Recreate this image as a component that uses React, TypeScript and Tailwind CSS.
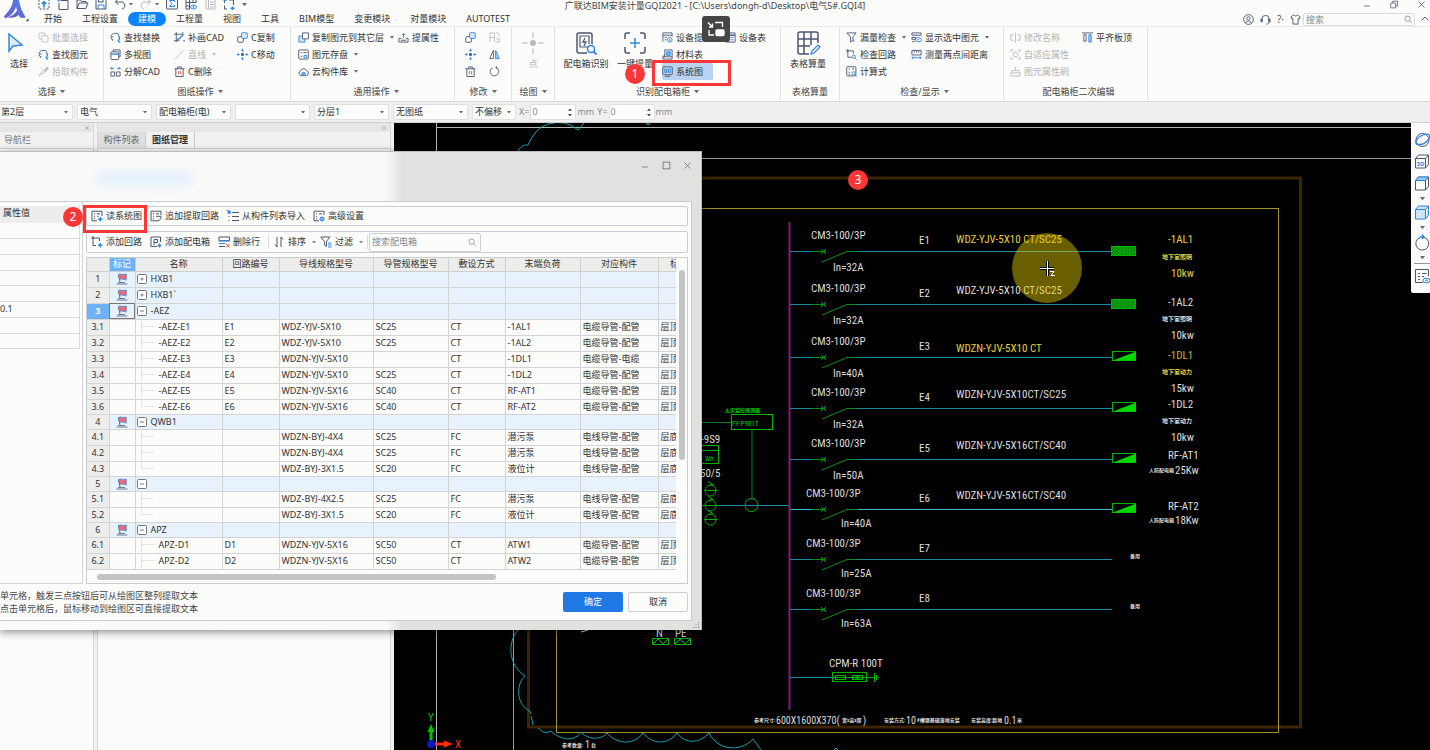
import { useState } from 'react';
import type { ReactNode } from 'react';
import clsx from 'clsx';

const NAVY = '#4b5673';
const BLUE = '#2f86e0';

/* ---------- icons, all drawn on a 12 x 12 grid ---------- */

const glyphs: Record<string, ReactNode> = {
  upload: <><rect x="1" y="1" width="10" height="10" strokeDasharray="2 1.4" /><path d="M6 9.5V4M3.8 6 6 3.6 8.2 6" stroke={BLUE} strokeWidth="1.6" /></>,
  newFile: <><path d="M4 2.500h7v9H2V5" /><path d="M0 2h4M2 0v4" stroke={BLUE} /></>,
  open: <path d="M1 10.500V2h3.500l1 1.500H10V5M1 10.500 3.200 5H12l-2.200 5.500z" />,
  save: <><path d="M1 1h8.500L11 2.500V11H1z" /><path d="M3.500 1v3h4.500V1" /><path d="M3 11V7h6v4" stroke={BLUE} /></>,
  undo: <path d="M4 1 1.500 4 4.500 6.500M1.500 4H7c5 0 5 6 1 7" />,
  redo: <path d="M8 1l2.500 3L7.500 6.500M10.500 4H5c-5 0-5 6-1 7" />,
  sigma: <><rect x=".5" y="0" width="11" height="11" rx="1" /><path d="M8.500 4V2.500h-5L6 5.500 3.500 8.500h5V7" stroke={BLUE} /></>,
  gridEye: <><path d="M1 1h10M1 4.500h10M1 8h4M1 1v10M4.500 1v10M8 1v4M1 11h4M11 1v4" /><ellipse cx="8.500" cy="9" rx="3" ry="2" stroke={BLUE} /><circle cx="8.500" cy="9" r=".6" stroke={BLUE} /></>,
  sheet: <path d="M2 1h9v10H2zM4.500 1v10M6 4h3.500M6 6.500h3.500M6 9h3.500" />,
  exportBox: <><path d="M4 2H1.500v3M1.500 7.500V11H4M6 2h4.500v5" /><path d="M0 2h3M1.500.5v3" stroke={BLUE} /><path d="M9.500 8.500v3.500M7.500 10.300h4" stroke={BLUE} strokeWidth="1.400" /></>,
  copyGrey: <><rect x="1" y="1" width="7" height="7" rx="2" /><rect x="4" y="4" width="7" height="7" rx="2" fill="#fcfcfb" /></>,
  find: <><path d="M3.500 9.500A4.500 4.500 0 0 1 2 3M4 1.500h4A4.500 4.500 0 0 1 9.500 3" stroke={NAVY} /><path d="M3 1.500v9" strokeDasharray="1.500 1.500" stroke={NAVY} /><path d="M9 3.500c2 2 1.500 5-.5 6.500M8.500 9.500l2.500 2" stroke={BLUE} strokeWidth="1.400" /></>,
  picker: <path d="M1 11.500 2 9l4-4M3 10l4-4M5 3.500 8.500 7M7 5l3-4 1.500 1.500L8 6z" fill="currentColor" />,
  multiView: <><path d="M3.500 2.500v-1.500h7.500v7.500h-1.500" /><rect x="1" y="3" width="8.500" height="8.500" rx="1" /><path d="M1 5.500h8.500" stroke={BLUE} strokeWidth="1.500" /></>,
  explode: <><path d="M1 6.500h4v4.500H1zM7 6.500h4v4.500H7z" /><path d="M4.500 2.500H.8M2.300 1 .8 2.500 2.300 4M7.500 2.500h3.700M9.700 1l1.500 1.500L9.700 4" stroke={BLUE} /></>,
  drawCad: <><path d="M0 2.500h9M2.500 0v11M0 9.500h6M9.500 2V0M10 9.500h2" /><path d="M4 9 10.500 2.500M4 9l.5-2" stroke={BLUE} strokeWidth="1.400" /></>,
  line: <path d="M1 11 11 1" strokeDasharray="6 1.500" />,
  trash: <><path d="M.5 3h11M4 3V1h4v2M2 3v8.500h8V3" /><path d="M4.800 5.500v3.500M7.200 5.500v3.500" stroke="#e0563f" /></>,
  copy: <><rect x=".8" y="5" width="6.200" height="6.200" rx="1.500" /><rect x="5" y=".8" width="6.200" height="6.200" rx="1" fill="#d7e9fc" stroke={BLUE} /></>,
  move: <><path d="M6 0v3M6 9v3M0 6h3M9 6h3M4.600 1.600 6 .3l1.400 1.300M4.600 10.400 6 11.700l1.400-1.300M1.600 4.600.3 6l1.300 1.400M10.400 4.600 11.700 6l-1.300 1.400" stroke={BLUE} /><path d="M5 5h2v2H5z" fill={NAVY} /></>,
  copyLayer: <><path d="M1 4.500h6.500V11H1z" stroke={BLUE} fill="#d7e9fc" /><path d="M5 1h6.500v6.500H5z" fill="#fcfcfb" /></>,
  storage: <><rect x=".8" y="1" width="10.400" height="10" rx="1" /><path d="M3 4h1.500M6 4h3.500M3 8h1.500" /><path d="M6.500 7h3v2.500h-3z" stroke={BLUE} /></>,
  cloud: <><path d="M3 10.500a2.800 2.800 0 0 1 0-5.300A3.500 3.500 0 0 1 9.500 5a2.900 2.900 0 0 1-.3 5.500z" /><path d="M4 9a2 2 0 0 1 4 0z" stroke={BLUE} fill="#7fb6ef" /></>,
  liftAttr: <><path d="M1 7v4h10V7M3 9h6M1 7h2.500M8.500 7H11" /><path d="M6 7V1.500M4 3.500 6 1.500l2 2" stroke={BLUE} /></>,
  mirrorGrey: <path d="M1 11V1h5v10M1 6h5M7.500 1c3 0 3.500 2 3.500 4M7.500 11h4V7.500h-4" />,
  mirror: <><path d="M4.800 1.500v9H.8z" /><path d="M7.200 1.500v9h4z" stroke={BLUE} fill="#a7cdf5" /></>,
  rotate: <path d="M8 1.800A4.700 4.700 0 1 1 4 1.800M8.500.3 7.500 2l1.800.8" />,
  device: <><path d="M1 10.500V1h10v4M1 3.500h10M3 6h2M3 8.500h2" /><circle cx="8.500" cy="8.500" r="2.500" stroke={BLUE} /><path d="M8.500 10V7.500" stroke={BLUE} /></>,
  material: <><path d="M3 9V1h8v8M1 11h10V8.500H1zM1 8.500 3 6" /><path d="M5 3h4v4H5z" fill="#7fb6ef" stroke={BLUE} /></>,
  deviceTable: <><path d="M1 1h10v10H1z" /><path d="M1 3.500h10" strokeWidth="1.600" /><path d="M6 6h3M6 8.500h3" stroke={BLUE} /></>,
  systemMap: <><rect x=".8" y="1" width="10.400" height="8.500" rx="1" /><path d="M3 11.300h6" /><path d="M3 3.500h2v3.500H3zM7 3.500h2v3.500H7z" stroke={BLUE} /></>,
  leak: <><path d="M1 1h10L7.500 5.500V9L5 11V5.500z" /><path d="M8.500 11V8.500" stroke={BLUE} /></>,
  loop: <><path d="M0 2h3M2 0v9h4M2 2h6v3" /><circle cx="8.500" cy="8.500" r="1.800" stroke={BLUE} /><path d="m10 10 1.500 1.500" stroke={BLUE} /></>,
  formula: <><rect x=".8" y=".8" width="10" height="10" rx="1" /><path d="M3 3.500h1M7 3h1.500M3 7h1M3 9h1" strokeWidth="1.400" /><circle cx="8.300" cy="8" r="1.800" stroke={BLUE} /><path d="m9.500 9.500 2 2" stroke={BLUE} /></>,
  showSel: <><path d="M1 1h10v2.500H1zM1 6h4v2H1zM1 10.500h3" /><ellipse cx="8" cy="8.500" rx="3.500" ry="2.300" stroke={BLUE} /><path d="M7 8.500h2" stroke={BLUE} /></>,
  measure: <><path d="M1 1.500h10v5H1zM3.500 1.500V4M6 1.500V4M8.500 1.500V4" /><path d="M1 9.500h10M2.500 8 1 9.500 2.500 11M9.500 8 11 9.500 9.500 11" stroke={BLUE} /></>,
  rename: <path d="M4 3H1v6h3M8 3h3v6H8M6 .5v11" />,
  adapt: <><path d="M1 3.500V1h2.500M8.500 1H11v2.500M11 8.500V11H8.500M3.500 11H1V8.500" /><rect x="3.500" y="3.500" width="5" height="5" rx="1" /></>,
  brush: <path d="M6 1v4M2 7.500V5h8v2.500M1 7.500h10V11H1z" />,
  align: <><path d="M0 1h12" /><path d="M2 3h2.500v7H2z" /><path d="M7.500 3H10v8H7.500z" stroke={BLUE} fill="#a7cdf5" /></>,
  readMap: <><path d="M11 6V1.200H1v9.600h5M3 3.800h1M6 3.800h3M3 6.300h1M3 8.600h1M6 6.300h1.500" /><path d="M9.300 7v4.500M7 9.300h4.600" stroke={BLUE} strokeWidth="1.400" /></>,
  addLoop: <><path d="M0 2h3M2 0v9.500h3M2 2h6.500v3" /><path d="M9.200 7v4.500M7 9.200h4.500" stroke={BLUE} strokeWidth="1.400" /></>,
  appendLoop: <><path d="M11 5V1.200H1v9.600h5M3 3.800h1M6 3.800h3M3 6.300h1M3 8.600h1M6 6.300h2" /><path d="M6 10.800c3 .5 5-1 5-4M8 6.300h3.500" /></>,
  listIn: <><path d="M5 2.500h7M5 6.500h7M5 10.500h7M1.500 6.500h1M1.500 10.500h1" /><path d="m0 0 3 3M3 .5V3H.5" stroke={BLUE} strokeWidth="1.400" /></>,
  advanced: <><path d="M11 5V1.200H1v9.600h5M3 3.800h1M6 3.800h3M3 6.300h1M3 8.600h1" /><circle cx="9" cy="9" r="2" fill="#7fb6ef" stroke={BLUE} /></>,
  addBox: <><path d="M7 10.500H1V1h9.500v5" /><path d="M4 9V3.500h3.500v3H4" /><path d="M9.500 7.500v4M7.500 9.500h4" stroke={BLUE} strokeWidth="1.400" /></>,
  delRow: <><path d="M7 10.500H1M1 1h10.500v4H1z" /><path d="M1 4.500h10.500M1 7.500h6" stroke={BLUE} /><path d="m8 8 3.500 3.500M11.500 8 8 11.500" stroke="#e0563f" /></>,
  sort: <path d="M4 1v10L2 8.500M8 11V1l2 2.500" />,
  filter: <><path d="M.8 1h9L6.500 5.500v5L4.500 9V5.500z" /><path d="M8 7h3.500M8 9h3.500M8 11h3.500" stroke={BLUE} /></>,
  search: <><circle cx="5.500" cy="5.500" r="4" /><path d="m8.500 8.500 3 3" /></>,
  user: <><circle cx="6" cy="6" r="5.300" /><circle cx="6" cy="4.800" r="1.800" /><path d="M2.800 9.800c1-2.600 5.400-2.600 6.400 0" /></>,
  headset: <path d="M2 8V5.500a4 4 0 0 1 8 0V8M1 5.500v3h1.500v-3zM11 5.500v3H9.500v-3zM10 8.500c0 2-1.500 2.500-3 2.500" />,
  shirt: <path d="M4 1 1 3l1 2.500 1.200-.5v6h5.600V5l1.200.5L11 3 8 1c-.5 1.500-3.500 1.500-4 0z" />,
  close: <path d="m2 2 8 8M10 2l-8 8" />,
  restore: <path d="M1 4h6.500v6.500H1zM3.500 4V1.500H10V8H7.500" />,
  maximize: <rect x="1.500" y="1.500" width="9" height="9" />,
  minimize: <path d="M1 8h8" />,
  chevronUp: <path d="m1 8 5-5 5 5" strokeWidth="1.400" />,
};

function Icon({ name, className = 'size-3', color = NAVY }: { name: string; className?: string; color?: string }) {
  return (
    <svg viewBox="0 0 12 12" className={clsx('shrink-0 overflow-visible', className)} fill="none" stroke={color} color={color} strokeWidth="1" aria-hidden="true">
      {glyphs[name]}
    </svg>
  );
}

function Caret({ color = '#6b6b6b', className = 'w-[5px]' }: { color?: string; className?: string }) {
  return (
    <svg viewBox="0 0 6 4" className={clsx('shrink-0', className)} fill={color} aria-hidden="true">
      <path d="M0 0h6L3 4z" />
    </svg>
  );
}

/* ---------- header ---------- */

const quickIcons = ['upload', 'newFile', 'open', 'save', 'undo', 'redo', 'sigma', 'gridEye', 'sheet', 'exportBox'];
const tabs = ['开始', '工程设置', '建模', '工程量', '视图', '工具', 'BIM模型', '变更模块', '对量模块', 'AUTOTEST'];

function Header() {
  const [active, setActive] = useState('建模');

  return (
    <header className="flex h-[27px] border-b border-[#ececec]">
      <svg viewBox="0 0 34 27" className="w-[34px] shrink-0" aria-hidden="true">
        <defs>
          <linearGradient id="logo" x1="0" y1="1" x2="1" y2="0">
            <stop offset="0" stopColor="#6a5fd0" />
            <stop offset="1" stopColor="#4d7fe6" />
          </linearGradient>
        </defs>
        <path d="M13 0h6c1 7 4 13 7 18-2 1-4 1-6 0-2-3-3-7-4-11-2 6-6 10-11 12-2-1-1-3 1-5 4-4 6-8 7-14z" fill="url(#logo)" />
        <path d="M7 18c4-1 8-3 10-7l2 4c-3 3-7 4-12 3z" fill="#5a63cf" />
        <path d="M29 19v3h-3z" fill="#444" />
      </svg>
      <div className="flex min-w-0 flex-1 flex-col">
        <div className="flex h-[12px] items-start justify-between">
          <div className="flex w-[240px] gap-[7px] pl-1">
            {quickIcons.map((name) => (
              <button key={name} aria-label={name} className="-mt-[2px] flex items-center gap-[3px]">
                <Icon name={name} className="size-[12px]" color={name === 'redo' || name === 'sheet' ? '#b9bcc4' : NAVY} />
                {(name === 'undo' || name === 'redo') && <Caret className="w-[4px]" />}
              </button>
            ))}
            <button aria-label="更多"><Caret className="w-[5px]" /></button>
          </div>
          <h1 className="text-[9px] leading-[11px] text-[#444]">广联达BIM安装计量GQI2021 - [C:\Users\dongh-d\Desktop\电气5#.GQI4]</h1>
          <div className="flex w-[274px] justify-end gap-[18px] pr-1">
            <button aria-label="最小化"><Icon name="minimize" className="size-[9px]" /></button>
            <button aria-label="还原"><Icon name="restore" className="size-[9px]" /></button>
            <button aria-label="关闭"><Icon name="close" className="size-[9px]" /></button>
          </div>
        </div>
        <div className="flex items-center justify-between">
          <nav className="flex">
            {tabs.map((t) => (
              <button
                key={t}
                onClick={() => setActive(t)}
                className={clsx('h-[14px] rounded-full px-[10px] text-[9px] leading-[14px]', t === active ? 'bg-[#0b84ff] text-white' : 'text-[#333]')}
              >
                {t}
              </button>
            ))}
          </nav>
          <div className="flex items-center gap-[6px]">
            <Icon name="user" className="size-[11px]" />
            <Icon name="headset" className="size-[11px]" />
            <span className="text-[10px] leading-[12px] text-[#4b5673]">?·</span>
            <Icon name="shirt" className="size-[11px]" />
            <label className="-ml-1 flex h-[13px] w-[112px] items-center rounded-[2px] border border-[#dcdcdc] px-[2px]">
              <input aria-label="搜索" placeholder="搜索" className="min-w-0 flex-1 text-[9px] leading-[11px] placeholder:text-[#888]" />
              <Icon name="search" className="size-[8px]" color="#777" />
            </label>
            <Icon name="chevronUp" className="mr-[1px] size-[8px]" />
          </div>
        </div>
      </div>
    </header>
  );
}

/* ---------- ribbon ---------- */

function Group({ label, caret, className, children }: { label: string; caret?: boolean; className?: string; children: ReactNode }) {
  return (
    <section className={clsx('flex h-[73px] shrink-0 flex-col justify-between border-r border-[#e2e2e2]', className)}>
      <div className="flex pt-[2px]">{children}</div>
      <div className="flex items-center justify-center gap-1 pb-[2px] text-[9px] leading-[12px] text-[#444]">
        {label}
        {caret && <Caret />}
      </div>
    </section>
  );
}

function Column({ className, children }: { className?: string; children: ReactNode }) {
  return <div className={clsx('flex shrink-0 flex-col items-start', className)}>{children}</div>;
}

function Tool({ icon, label, caret, disabled, on }: { icon: string; label?: string; caret?: boolean; disabled?: boolean; on?: boolean }) {
  return (
    <button
      disabled={disabled}
      aria-label={label ?? icon}
      className={clsx('flex h-[17px] items-center gap-[3px] whitespace-nowrap text-[9px] leading-[14px]', disabled ? 'text-[#b4b4b4]' : 'text-[#333]', on && 'rounded-[2px] bg-[#b9d3f0] pr-[10px]')}
    >
      <Icon name={icon} className="size-[11px]" color={disabled ? '#bdbdbd' : NAVY} />
      {label}
      {caret && <span className="pl-[3px]"><Caret className="w-[4px]" color={disabled ? '#bdbdbd' : '#6b6b6b'} /></span>}
    </button>
  );
}

function BigTool({ label, disabled, className, children }: { label: string; disabled?: boolean; className?: string; children: ReactNode }) {
  return (
    <button disabled={disabled} className={clsx('flex shrink-0 flex-col items-center gap-[1px] whitespace-nowrap pt-[1px] text-[9px] leading-[14px]', disabled ? 'text-[#b4b4b4]' : 'text-[#333]', className)}>
      <svg viewBox="0 0 26 26" className="size-[26px]" fill="none" stroke={NAVY} strokeWidth="1.500" aria-hidden="true">{children}</svg>
      {label}
    </button>
  );
}

function Ribbon() {
  return (
    <div className="flex h-[75px] overflow-hidden border-b border-[#d9d9d9]">
      <Group label="选择" caret className="w-[104px]">
        <BigTool label="选择" className="w-[38px]">
          <path d="M3 4v17l4-5 1 0 8-1z" stroke={BLUE} fill="#dcebfb" />
        </BigTool>
        <Column>
          <Tool icon="copyGrey" label="批量选择" disabled />
          <Tool icon="find" label="查找图元" />
          <Tool icon="picker" label="拾取构件" disabled />
        </Column>
      </Group>
      <Group label="图纸操作" caret className="w-[187px] pl-[6px]">
        <Column className="w-[64px]">
          <Tool icon="find" label="查找替换" />
          <Tool icon="multiView" label="多视图" />
          <Tool icon="explode" label="分解CAD" />
        </Column>
        <Column className="w-[63px]">
          <Tool icon="drawCad" label="补画CAD" />
          <Tool icon="line" label="直线" caret disabled />
          <Tool icon="trash" label="C删除" />
        </Column>
        <Column>
          <Tool icon="copy" label="C复制" />
          <Tool icon="move" label="C移动" />
        </Column>
      </Group>
      <Group label="通用操作" caret className="w-[164px] pl-[7px]">
        <Column className="w-[100px]">
          <Tool icon="copyLayer" label="复制图元到其它层" caret />
          <Tool icon="storage" label="图元存盘" caret />
          <Tool icon="cloud" label="云构件库" caret />
        </Column>
        <Column>
          <Tool icon="liftAttr" label="提属性" />
        </Column>
      </Group>
      <Group label="修改" caret className="w-[57px]">
        <div className="grid grid-cols-2 gap-x-[13px] pl-[10px]">
          <Tool icon="copy" />
          <Tool icon="mirrorGrey" disabled />
          <Tool icon="move" />
          <Tool icon="mirror" />
          <Tool icon="trash" />
          <Tool icon="rotate" />
        </div>
      </Group>
      <Group label="绘图" caret className="w-[43px]">
        <BigTool label="点" disabled className="w-full">
          <path d="M13 2v6M13 18v6M2 13h6M18 13h6" stroke="#b9b9b9" strokeWidth="1" />
          <circle cx="13" cy="13" r="3" fill="#b9b9b9" stroke="none" />
        </BigTool>
      </Group>
      <Group label="识别配电箱柜" caret className="w-[226px]">
        <BigTool label="配电箱识别" className="w-[62px]">
          <path d="M19 14V5a2 2 0 0 0-2-2H6a2 2 0 0 0-2 2v16a2 2 0 0 0 2 2h8" />
          <path d="M15 17H7V6h9v8" strokeWidth="1.200" />
          <path d="m12 8-2 4h3l-2 4" strokeWidth="1.300" />
          <circle cx="18" cy="19" r="3.500" stroke={BLUE} /><path d="m20.500 21.500 3 3" stroke={BLUE} strokeWidth="2" />
        </BigTool>
        <BigTool label="一键提量" className="w-[36px]">
          <path d="M8 3H5a2 2 0 0 0-2 2v4M18 3h3a2 2 0 0 1 2 2v4M8 23H5a2 2 0 0 1-2-2v-4M18 23h3a2 2 0 0 0 2-2v-4" />
          <path d="M13 8v10M8 13h10" stroke={BLUE} />
        </BigTool>
        <Column className="w-[68px] pl-[9px]">
          <Tool icon="device" label="设备提量" />
          <Tool icon="material" label="材料表" />
          <Tool icon="systemMap" label="系统图" on />
        </Column>
        <Column className="pl-[4px]">
          <Tool icon="deviceTable" label="设备表" />
        </Column>
      </Group>
      <Group label="表格算量" className="w-[59px]">
        <BigTool label="表格算量" className="w-full pr-1">
          <path d="M14 24H5a2 2 0 0 1-2-2V4a2 2 0 0 1 2-2h16a2 2 0 0 1 2 2v9M9 2v22M16 2v13M3 9h20M3 16h12" />
          <path d="m16 24 1-3 6-6 2 2-6 6z" stroke={BLUE} strokeWidth="1.200" />
        </BigTool>
      </Group>
      <Group label="检查/显示" caret className="w-[164px] pl-[6px]">
        <Column className="w-[65px]">
          <Tool icon="leak" label="漏量检查" caret />
          <Tool icon="loop" label="检查回路" />
          <Tool icon="formula" label="计算式" />
        </Column>
        <Column>
          <Tool icon="showSel" label="显示选中图元" caret />
          <Tool icon="measure" label="测量两点间距离" />
        </Column>
      </Group>
      <Group label="配电箱柜二次编辑" className="w-[144px] pl-[6px]">
        <Column className="w-[72px]">
          <Tool icon="rename" label="修改名称" disabled />
          <Tool icon="adapt" label="自适应属性" disabled />
          <Tool icon="brush" label="图元属性刷" disabled />
        </Column>
        <Column>
          <Tool icon="align" label="平齐板顶" />
        </Column>
      </Group>
    </div>
  );
}

/* ---------- option bar ---------- */

const levels = ['第2层', '电气', '配电箱柜(电)', '', '分层1', '无图纸'];

function Picker({ value, label, narrow }: { value: string; label: string; narrow?: boolean }) {
  return (
    <span className={clsx('flex h-[16px] shrink-0 items-center rounded-[2px] border border-[#e0e0e0] bg-[#fdfdfd] pr-[4px]', narrow ? 'w-[44px]' : 'w-[75px]')}>
      <select aria-label={label} className="min-w-0 flex-1 appearance-none pl-[2px] text-[9px] leading-[14px] text-[#333]">
        <option>{value}</option>
      </select>
      <Caret className="w-[4px]" />
    </span>
  );
}

function Offset({ axis }: { axis: string }) {
  return (
    <label className="flex items-center gap-px text-[9px] leading-[14px] text-[#8a8a8a]">
      {axis}=
      <span className="flex h-[16px] w-[46px] items-center rounded-[2px] border border-[#e0e0e0] bg-[#fdfdfd] pr-[3px]">
        <input defaultValue="0" className="min-w-0 flex-1 pl-[1px]" />
        <svg viewBox="0 0 5 11" className="w-[4px]" fill="#444" aria-hidden="true"><path d="M0 3.500 2.500.5 5 3.500zM0 7.500h5L2.500 10.500z" /></svg>
      </span>
      mm
    </label>
  );
}

function OptionBar() {
  return (
    <div className="flex h-[21px] items-center gap-[3px] border-b border-[#cfcfcf] bg-[#efefef]">
      <div className="-ml-[2px] flex gap-1">
        {levels.map((v, i) => <Picker key={i} value={v} label={`选项${i + 1}`} />)}
        <Picker value="不偏移" label="偏移" narrow />
      </div>
      <Offset axis="X" />
      <Offset axis="Y" />
    </div>
  );
}

/* ---------- docked panels ---------- */

function Docks() {
  return (
    <div className="flex w-[394px] shrink-0 gap-[3px] bg-[#f1f1f1] pr-[3px]">
      <section className="w-[94px] border-r border-[#d8d8d8] bg-[#fbfbfa]">
        <div className="flex h-[9px] items-center justify-end bg-[#e6e6e6] pr-[3px]"><Icon name="close" className="size-[6px]" color="#888" /></div>
        <h2 className="h-[17px] border-b border-[#d0d0d0] bg-[#f1f1f1] pl-1 text-[9px] leading-[16px] text-[#777]">导航栏</h2>
      </section>
      <section className="flex-1 border-x border-[#d8d8d8] bg-[#fbfbfa]">
        <div className="flex h-[9px] items-center justify-end bg-[#e6e6e6] pr-[3px]"><Icon name="close" className="size-[6px]" color="#888" /></div>
        <div className="flex h-[17px] border-b border-[#d0d0d0] bg-[#f1f1f1] text-[9px] leading-[16px]">
          <button className="w-[48px] border-r border-[#c9c9c9] bg-[#dedede] text-[#666]">构件列表</button>
          <button className="w-[49px] border-r border-[#c9c9c9] font-bold text-[#333]">图纸管理</button>
        </div>
      </section>
    </div>
  );
}

/* ---------- CAD drawing ---------- */

const CAD_FONT = '"Liberation Sans Narrow", "Roboto Condensed", Roboto, "Noto Sans CJK SC", sans-serif';
const WHITE = '#dedede';
const YELLOW = '#e8d040';
const GREEN = '#00b400';
const CYAN = '#1a8ba3';

interface Circuit {
  id: string;
  y: number;
  x: number;
  amp: string;
  ampX: number;
  cable?: string;
  cableY?: number;
  hot?: boolean;
  end?: 'hatch' | 'wedge';
}

const circuits: Circuit[] = [
  { id: 'E1', y: 251, x: 811, amp: 'In=32A', ampX: 833, cable: 'WDZ-YJV-5X10 CT/SC25', cableY: 243, hot: true, end: 'hatch' },
  { id: 'E2', y: 304, x: 811, amp: 'In=32A', ampX: 833, cable: 'WDZ-YJV-5X10 CT/SC25', cableY: 294, end: 'hatch' },
  { id: 'E3', y: 357, x: 811, amp: 'In=40A', ampX: 833, cable: 'WDZN-YJV-5X10 CT', cableY: 352, hot: true, end: 'wedge' },
  { id: 'E4', y: 408, x: 811, amp: 'In=32A', ampX: 833, cable: 'WDZN-YJV-5X10CT/SC25', cableY: 398, end: 'wedge' },
  { id: 'E5', y: 459, x: 811, amp: 'In=50A', ampX: 833, cable: 'WDZN-YJV-5X16CT/SC40', cableY: 449, end: 'wedge' },
  { id: 'E6', y: 509, x: 806, amp: 'In=40A', ampX: 841, cable: 'WDZN-YJV-5X16CT/SC40', cableY: 499, end: 'wedge' },
  { id: 'E7', y: 559, x: 806, amp: 'In=25A', ampX: 841 },
  { id: 'E8', y: 609, x: 806, amp: 'In=63A', ampX: 841 },
];

const loads: [number, number, string, string, number?][] = [
  [1168, 243, '-1AL1', YELLOW],
  [1162, 259, '地下室照明', YELLOW, 6],
  [1171, 277, '10kw', YELLOW],
  [1168, 306, '-1AL2', WHITE],
  [1162, 321, '地下室照明', WHITE, 6],
  [1171, 339, '10kw', WHITE],
  [1168, 359, '-1DL1', '#c8b030'],
  [1162, 374, '地下室动力', YELLOW, 6],
  [1171, 392, '15kw', WHITE],
  [1168, 408, '-1DL2', WHITE],
  [1162, 423, '地下室动力', WHITE, 6],
  [1171, 441, '10kw', WHITE],
  [1168, 459, 'RF-AT1', WHITE],
  [1149, 472, '人防配电箱', WHITE, 5],
  [1175, 474, '25Kw', WHITE],
  [1168, 510, 'RF-AT2', WHITE],
  [1149, 522, '人防配电箱', WHITE, 5],
  [1175, 524, '18Kw', WHITE],
  [1130, 558, '备用', WHITE, 5],
  [1130, 608, '备用', WHITE, 5],
];

function Drawing() {
  return (
    <svg viewBox="394 123 1036 627" preserveAspectRatio="xMinYMin slice" className="absolute inset-0 h-full w-full" fill="none" fontFamily={CAD_FONT} fontSize="11">
      <defs>
        <pattern id="hatch" width="3" height="3" patternUnits="userSpaceOnUse">
          <path d="M0 3 3 0" stroke="#007000" strokeWidth="1" />
        </pattern>
      </defs>
      <path d="M436.500 123v627M436 127.500h994" stroke="#b4b4b4" />
      <path d="M513.500 750V158.500H1430" stroke="#9a9a9a" />
      <rect x="528.500" y="178" width="772" height="549" stroke="#3d2504" strokeWidth="3" />
      <rect x="556.500" y="208.500" width="722" height="524" stroke="#a3932c" />

      {/* revision cloud */}
      <path
        d="M518 151Q522 144 528 145 535 128 548 124 566 119 578 130L584 123M646 123l2 2 2-2M518 630C508 641 507 664 525 676 515 685 517 706 530 711l1 3M531 716l2 9M538 728l5 4q3 2 8-1c7 7 22 13 30 1 5 7 20 9 26 1 8 10 26 14 36 0 9 11 24 13 34 0 8 11 22 11 32 0 8 17 31 20 44 6l8 11M834 750l2-2 2 2"
        stroke="#17a0b4"
      />

      {/* incoming side */}
      <path d="M702 505.500h87" stroke={CYAN} />
      <g stroke={GREEN}>
        <path d="M702 422.500h29M752 430v68" stroke="#0a7a1e" />
        <rect x="731.500" y="414.500" width="41" height="15" />
        <circle cx="751.500" cy="505" r="6.500" />
        <path d="M700 445.500h18.500v18H700M700 450.500h18" />
        {[490.5, 505.5, 519.5].map((cy) => (
          <g key={cy}>
            <circle cx="710.500" cy={cy} r="5.500" />
            <path d={`M704 ${cy}h13M708 ${cy - 9}l5 3-4 1`} />
          </g>
        ))}
      </g>
      <text x="725" y="412" fontSize="5" fontWeight="700" fill="#00d000">火灾监控探测器</text>
      <text x="732" y="426" fontSize="7" fill="#00d000">FY-P901T</text>
      <text x="705" y="461" fontSize="7" fill="#00d000">Wh</text>
      <g fill={WHITE}>
        <text x="701" y="443">-9S9</text>
        <text x="700" y="477">50/5</text>
        <text x="656" y="637">N</text>
        <text x="675" y="637">PE</text>
      </g>
      <path d="M581 632l7-2" stroke={WHITE} />
      <path d="M652.500 638.500h16v6h-16zM674.500 638.500h16v6h-16zM653 644l5-5 5 5 5-5M675 644l5-5 5 5 5-5" stroke={GREEN} />

      {/* bus bar and its outgoing circuits */}
      {circuits.map((c) => (
        <g key={c.id}>
          <path d={`M790 ${c.y + 0.5}h22M858 ${c.y + 0.5}h254`} stroke={c.id === 'E6' ? '#42b4d0' : CYAN} />
          <path d={`M812 ${c.y + 0.5}h13M821 ${c.y - 2}l5 5M826 ${c.y - 2}l-5 5M822 ${c.y + 11}l25-10.500h11`} stroke="#0a8f14" />
          <g fill={WHITE}>
            <text x={c.x} y={c.y - 12}>CM3-100/3P</text>
            <text x={c.ampX} y={c.y + (c.ampX > 833 ? 18 : 20)}>{c.amp}</text>
            <text x="919" y={c.y - 7}>{c.id}</text>
          </g>
          {c.cable && <text x="956" y={c.cableY} fill={c.hot ? YELLOW : WHITE}>{c.cable}</text>}
          {c.end === 'hatch' && (
            <>
              <rect x="1111.500" y={c.y - 4.5} width="24" height="9" fill="#00a800" stroke="#00c000" />
              <rect x="1111.500" y={c.y - 4.5} width="24" height="9" fill="url(#hatch)" />
            </>
          )}
          {c.end === 'wedge' && (
            <>
              <rect x="1112.500" y={c.y - 5.5} width="23" height="9" stroke={GREEN} fill="#000" />
              <path d={`M1113 ${c.y + 3.5}l23-9v9z`} fill="#00d800" />
            </>
          )}
        </g>
      ))}
      <path d="M789.500 222v488" stroke="#7c1f7c" strokeWidth="2" />
      {loads.map(([x, y, text, fill, size], i) => (
        <text key={i} x={x} y={y} fill={fill} fontSize={size ?? 11} fontWeight={size ? 700 : 400}>{text}</text>
      ))}

      {/* surge protector */}
      <path d="M790 677.500h42" stroke={CYAN} />
      <g stroke={GREEN}>
        <rect x="832.500" y="672.500" width="34" height="9" />
        <rect x="835.500" y="675.500" width="10" height="4" />
        <rect x="852.500" y="675.500" width="10" height="4" />
        <path d="M832 677.500h42M874.500 673v9M876.500 675v5M878.500 677v1M856 676l4 1.500-4 1.500z" />
      </g>
      <g fill={WHITE}>
        <text x="829" y="667">CPM-R 100T</text>
        <g fontSize="5" fontWeight="700">
          <text x="754" y="722">参考尺寸:</text>
          <text x="842" y="722">宽x高x厚</text>
          <text x="884" y="722">安装方式:</text>
          <text x="917" y="722">#槽钢基础落地安装</text>
          <text x="971" y="722">安装高度:距地</text>
          <text x="1017" y="722">米</text>
          <text x="562" y="747">参考数量:</text>
          <text x="591" y="747">台</text>
        </g>
        <g fontSize="10">
          <text x="776" y="724">600X1600X370(</text>
          <text x="863" y="724">)</text>
          <text x="906" y="724">10</text>
          <text x="1004" y="724">0.1</text>
          <text x="585" y="748">1</text>
        </g>
      </g>

      {/* axis tripod */}
      <path d="M431 742v-14" stroke="#00c400" strokeWidth="3" /><path d="M427.500 732l3.500-8 3.500 8z" fill="#00c400" />
      <path d="M434 744h12" stroke="#ff2a12" strokeWidth="3" /><path d="M444 740.500l9 3.500-9 3.500z" fill="#ff2a12" />
      <circle cx="431" cy="744" r="4" fill="#0a18c8" />
      <text x="428" y="721" fill="#00c400">Y</text>
      <text x="455" y="748" fill="#ff2a12">X</text>

      {/* pointer halo and crosshair */}
      <circle cx="1047" cy="268" r="35" fill="#e6cf00" fillOpacity=".46" />
      <path d="M1040 268.500h14M1047.500 261v15" stroke="#000" strokeWidth="3" />
      <path d="M1040 268.500h14M1047.500 261v15" stroke="#fff" />
      <path d="M1050 271.500h4l-3 4h4" stroke="#fff" />
    </svg>
  );
}

function ViewTools() {
  const cube = 'M1.500 5.500h10v9.500h-10zM1.500 5.500l3-3.500h10l-3 3.500M14.500 2v9.500l-3 3.500';
  return (
    <aside className="absolute right-0 top-0 flex w-[19px] flex-col items-center gap-[4px] overflow-hidden rounded-bl-[2px] bg-[#fbfbfb] pb-[8px] pl-[3px] pt-[8px]">
      {['orbit', '3d', 'top', 'solid', 'spin', 'list'].map((k) => (
        <div key={k} className={clsx('flex w-full flex-col items-center gap-[4px]', k === 'list' && 'border-t border-[#999] pt-[3px]')}>
          <button aria-label={k} className="w-[17px]">
            <svg viewBox="0 0 17 18" className="h-[18px] w-[17px]" fill="none" stroke={NAVY} aria-hidden="true">
              {k === 'orbit' && <><circle cx="8.500" cy="9" r="6.500" /><path d="M4 14C-1 12 3 6 9 4s9 0 5 5-8 5-11 4" stroke={BLUE} strokeWidth="1.300" /></>}
              {k === '3d' && <><path d={cube} /><text x="2.500" y="13" fontSize="6" fontWeight="700" fill={BLUE} stroke="none">3D</text></>}
              {k === 'top' && <><path d={cube} /><path d="M2 5.500 4.500 2h10l-3 3.500z" fill="#9cc8f5" stroke={BLUE} /></>}
              {k === 'solid' && <path d={cube} fill="#cfe3f9" stroke={BLUE} />}
              {k === 'spin' && <><path d="M10 3.300a6.500 6.500 0 1 1-4 .2" /><path d="M8 .5 10 3l-2 2M6 3h4" stroke={BLUE} strokeWidth="1.400" /></>}
              {k === 'list' && <><path d="M9 15.500H1.500v-13h13V9M4 6.500h2M8 6.500h4.500M4 9.500h2M8 9.500h2M4 12.500h2" /><ellipse cx="12.500" cy="13.500" rx="3.500" ry="2.300" stroke={BLUE} fill="#fff" /><circle cx="12.500" cy="13.500" r=".8" stroke={BLUE} /></>}
            </svg>
          </button>
          {(k === 'top' || k === 'solid' || k === 'spin') && <Caret className="w-[5px]" />}
        </div>
      ))}
    </aside>
  );
}

/* ---------- system diagram dialog ---------- */

const columns = ['名称', '回路编号', '导线规格型号', '导管规格型号', '敷设方式', '末端负荷', '对应构件', '标高'];

interface Row {
  no: string;
  name: string;
  cells?: string[];
  closed?: boolean;
  last?: boolean;
}

const rows: Row[] = [
  { no: '1', name: 'HXB1', closed: true },
  { no: '2', name: 'HXB1`', closed: true },
  { no: '3', name: '-AEZ' },
  { no: '3.1', name: '-AEZ-E1', cells: ['E1', 'WDZ-YJV-5X10', 'SC25', 'CT', '-1AL1', '电缆导管-配管', '层顶标高'] },
  { no: '3.2', name: '-AEZ-E2', cells: ['E2', 'WDZ-YJV-5X10', 'SC25', 'CT', '-1AL2', '电缆导管-配管', '层顶标高'] },
  { no: '3.3', name: '-AEZ-E3', cells: ['E3', 'WDZN-YJV-5X10', '', 'CT', '-1DL1', '电缆导管-电缆', '层顶标高'] },
  { no: '3.4', name: '-AEZ-E4', cells: ['E4', 'WDZN-YJV-5X10', 'SC25', 'CT', '-1DL2', '电缆导管-配管', '层顶标高'] },
  { no: '3.5', name: '-AEZ-E5', cells: ['E5', 'WDZN-YJV-5X16', 'SC40', 'CT', 'RF-AT1', '电缆导管-配管', '层顶标高'] },
  { no: '3.6', name: '-AEZ-E6', cells: ['E6', 'WDZN-YJV-5X16', 'SC40', 'CT', 'RF-AT2', '电缆导管-配管', '层顶标高'], last: true },
  { no: '4', name: 'QWB1' },
  { no: '4.1', name: '', cells: ['', 'WDZN-BYJ-4X4', 'SC25', 'FC', '潜污泵', '电线导管-配管', '层底标高'] },
  { no: '4.2', name: '', cells: ['', 'WDZN-BYJ-4X4', 'SC25', 'FC', '潜污泵', '电线导管-配管', '层底标高'] },
  { no: '4.3', name: '', cells: ['', 'WDZ-BYJ-3X1.5', 'SC20', 'FC', '液位计', '电线导管-配管', '层底标高'], last: true },
  { no: '5', name: '' },
  { no: '5.1', name: '', cells: ['', 'WDZ-BYJ-4X2.5', 'SC25', 'FC', '潜污泵', '电线导管-配管', '层底标高'] },
  { no: '5.2', name: '', cells: ['', 'WDZ-BYJ-3X1.5', 'SC20', 'FC', '液位计', '电线导管-配管', '层底标高'], last: true },
  { no: '6', name: 'APZ' },
  { no: '6.1', name: 'APZ-D1', cells: ['D1', 'WDZN-YJV-5X16', 'SC50', 'CT', 'ATW1', '电缆导管-配管', '层顶标高'] },
  { no: '6.2', name: 'APZ-D2', cells: ['D2', 'WDZN-YJV-5X16', 'SC50', 'CT', 'ATW2', '电缆导管-配管', '层顶标高'] },
];

function Flag() {
  return (
    <svg viewBox="0 0 12 12" className="mx-auto size-3" fill="none" aria-hidden="true">
      <path d="M.5 11h11M2 9.500h7" stroke="#6b7b98" />
      <path d="M2.500 1.500 4 9M10 1v6.500" stroke="#2f6fd0" />
      <path d="M2.500 1.500c2.500-1.500 4 1 7.500-.5l-.5 5C7.500 7.500 6 5 3.500 6.500z" fill="#ec6a70" stroke="#4b86da" strokeWidth=".8" />
    </svg>
  );
}

function CircuitTable() {
  return (
    <table className="w-[613px] table-fixed border-collapse text-[9px] leading-[12px] text-[#333]">
      <colgroup>
        <col className="w-[22px]" /><col className="w-[26px]" /><col className="w-[87px]" /><col className="w-[57px]" /><col className="w-[94px]" />
        <col className="w-[75px]" /><col className="w-[57px]" /><col className="w-[75px]" /><col className="w-[78px]" /><col className="w-[42px]" />
      </colgroup>
      <thead>
        <tr className="h-[13px] bg-[#ededec]">
          <th className="border-b border-r border-[#cfcfcf]" />
          <th className="border-b border-r border-[#cfcfcf] bg-[#6fb0f6] p-0 font-normal text-white">标记</th>
          {columns.map((c) => <th key={c} className="border-b border-r border-[#cfcfcf] p-0 font-normal">{c}</th>)}
        </tr>
      </thead>
      <tbody>
        {rows.map((r) => {
          const group = !r.cells;
          const picked = r.no === '3';
          const short = r.last || (group && !r.closed && !picked);
          return (
            <tr key={r.no} className={clsx(group && 'bg-[#e8f2fd]', short ? 'h-[15px]' : 'h-[16px]')}>
              <td className={clsx('border-b border-r border-[#d4d4d4] p-0 text-center', picked ? 'bg-[#6fb0f6] font-bold text-white' : 'bg-[#ededec]')}>{r.no}</td>
              <td className={clsx('border-b border-r border-[#d4d4d4] p-0', picked && 'outline outline-1 -outline-offset-1 outline-[#777]')}>{group && <Flag />}</td>
              <td className="border-b border-r border-[#d4d4d4] p-0">
                {group ? (
                  <div className="flex h-[12px] items-center gap-[4px] pl-[1px]">
                    <button aria-label={r.closed ? '展开' : '折叠'}>
                      <svg viewBox="0 0 10 10" className="size-[10px]" fill="#fff" stroke="#777" aria-hidden="true">
                        <rect x=".5" y=".5" width="9" height="9" rx="1" />
                        <path d={r.closed ? 'M3.500 5h3M5 3.500v3' : 'M3 5h4'} />
                      </svg>
                    </button>
                    {r.name}
                  </div>
                ) : (
                  <div className="flex h-[14px] items-center">
                    <svg viewBox="0 0 23 14" className="h-[14px] w-[23px] shrink-0" stroke="#e4e4e4" fill="none" aria-hidden="true">
                      <path d={r.last ? 'M5.500 0v6.500h12' : 'M5.500 0v14M5.500 6.500h12'} />
                    </svg>
                    {r.name}
                  </div>
                )}
              </td>
              {(r.cells ?? ['', '', '', '', '', '', '']).map((c, i) => (
                <td key={i} className="overflow-hidden whitespace-nowrap border-b border-r border-[#d4d4d4] p-0 pl-[2px]">{c}</td>
              ))}
            </tr>
          );
        })}
      </tbody>
    </table>
  );
}

function BarButton({ icon, label, caret }: { icon: string; label: string; caret?: boolean }) {
  return (
    <button className="flex items-center gap-[3px] whitespace-nowrap">
      <Icon name={icon} />
      {label}
      {caret && <span className="pl-[3px]"><Caret className="w-[4px]" color="#888" /></span>}
    </button>
  );
}

function SystemDialog() {
  return (
    <section role="dialog" aria-label="系统图" className="absolute left-0 top-[151px] w-[702px] border-r border-t border-[#bdbdbd] bg-[linear-gradient(90deg,#fafafa_0,#f9f9f9_386px,#e1e1e0_402px,#e1e1e0_100%)] pb-[9px] pr-[9px] text-[9px] leading-[14px] text-[#333] shadow-[0_2px_8px_rgba(0,0,0,0.45)]">
      <div className="absolute left-[97px] top-[20px] h-[14px] w-[95px] bg-[#e4f0fc] blur-[5px]" />
      <div className="flex h-[49px] items-start justify-end gap-[12px] pt-[9px]">
        <button aria-label="最小化"><Icon name="minimize" className="size-[9px]" color="#666" /></button>
        <button aria-label="最大化"><Icon name="maximize" className="size-[9px]" color="#666" /></button>
        <button aria-label="关闭"><Icon name="close" className="size-[9px]" color="#666" /></button>
      </div>
      <div className="border-b border-r border-t border-[#c9cdd2] bg-[#fcfcfb]">
        <div className="flex">
          <div className="w-[83px] border-b border-r border-[#d4d4d4] pt-[4px]">
            <div className="mr-[2px] border-r border-[#dcdcdc]">
              <div className="h-[17px] bg-[#ededec] pl-[3px]">属性值</div>
              {['', '', '', '', '', '0.1', '', ''].map((v, i) => (
                <div key={i} className={clsx('border-b border-[#dcdcdc]', i % 4 === 3 ? 'h-[15px]' : 'h-[16px]')}>{v}</div>
              ))}
            </div>
          </div>
          <div className="mr-[3px] flex min-w-0 flex-1 flex-col pl-[3px] pt-[4px]">
            <div className="flex h-[20px] items-center gap-2 rounded-[2px] border border-[#c9cdd2] pl-1">
              <BarButton icon="readMap" label="读系统图" />
              <BarButton icon="appendLoop" label="追加提取回路" />
              <BarButton icon="listIn" label="从构件列表导入" />
              <BarButton icon="advanced" label="高级设置" />
            </div>
            <div className="mt-[5px] flex h-[22px] items-center gap-2 rounded-[2px] border border-[#c9cdd2] pl-1">
              <BarButton icon="addLoop" label="添加回路" />
              <BarButton icon="addBox" label="添加配电箱" />
              <BarButton icon="delRow" label="删除行" />
              <div className="flex items-center gap-1">
                <span className="h-[14px] border-l border-[#ddd]" />
                <BarButton icon="sort" label="排序" caret />
                <BarButton icon="filter" label="过滤" caret />
                <span className="h-[14px] border-l border-[#ddd]" />
              </div>
              <label className="-ml-[7px] flex h-[19px] w-[112px] items-center rounded-[2px] border border-[#d0d0d0] px-[2px]">
                <input aria-label="搜索配电箱" placeholder="搜索配电箱" className="min-w-0 flex-1 placeholder:text-[#888]" />
                <Icon name="search" className="mr-[2px] size-[8px]" color="#777" />
              </label>
            </div>
            <div className="mt-[4px] border border-[#c9cdd2]">
              <div className="flex h-[314px] justify-between">
                <div className="w-[589px] overflow-hidden"><CircuitTable /></div>
                <div className="mr-[2px] mt-[12px] h-[190px] w-[6px] rounded-full bg-[#c4c4c4]" />
              </div>
              <div className="mb-[3px] ml-[10px] mt-[2px] h-[6px] w-[399px] rounded-full bg-[#c4c4c4]" />
            </div>
          </div>
        </div>
        <div className="flex h-[36px] items-center justify-between pr-[3px]">
          <p className="leading-[13px] text-[#444]">
            单元格，触发三点按钮后可从绘图区整列提取文本
            <br />
            点击单元格后，鼠标移动到绘图区可直接提取文本
          </p>
          <div className="flex gap-[5px]">
            <button className="h-[20px] w-[60px] rounded-[2px] bg-[#1f78e4] text-white">确定</button>
            <button className="h-[20px] w-[60px] rounded-[2px] border border-[#cfcfcf]">取消</button>
          </div>
        </div>
      </div>
      <svg viewBox="0 0 7 7" className="absolute bottom-[1px] right-[1px] w-[7px]" fill="#777" aria-hidden="true">
        <path d="M5 0h1v1H5zM5 2.500h1v1H5zM2.500 2.500h1v1h-1zM5 5h1v1H5zM2.500 5h1v1h-1zM0 5h1v1H0z" />
      </svg>
    </section>
  );
}

/* ---------- tutorial marks laid over the window ---------- */

function Step({ n, className }: { n: number; className: string }) {
  return <span className={clsx('absolute flex size-5 items-center justify-center rounded-full bg-[#fb3636] text-[12px] leading-[20px] text-white', className)}>{n}</span>;
}

export default function App() {
  return (
    <div className="relative flex h-screen min-h-[640px] flex-col overflow-hidden bg-[#fcfcfb] font-['Noto_Sans','Noto_Sans_CJK_SC',sans-serif]">
      <Header />
      <Ribbon />
      <OptionBar />
      <main className="flex min-h-0 flex-1">
        <Docks />
        <div className="relative min-w-0 flex-1 overflow-hidden bg-black">
          <Drawing />
          <ViewTools />
        </div>
      </main>
      <SystemDialog />

      <div className="absolute left-[702px] top-[16px] flex h-[26px] w-[28px] items-center justify-center rounded-[3px] bg-[#454545]">
        <svg viewBox="0 0 18 16" className="w-[18px]" fill="none" stroke="#fff" strokeWidth="1.300" aria-hidden="true">
          <path d="M1 1.500 5.500 6M5.500 2.500V6H2M8 1.500h7.500V6M2 9v5h5" />
          <rect x="9" y="9" width="8" height="5.500" rx="1" fill="#fff" />
        </svg>
      </div>
      <div className="absolute left-[652px] top-[60px] h-[26px] w-[79px] border-[3px] border-[#fb3636]" />
      <div className="absolute left-[83px] top-[205px] h-[28px] w-[64px] border-[3px] border-[#fb3636]" />
      <Step n={1} className="left-[625px] top-[64px]" />
      <Step n={2} className="left-[63px] top-[207px]" />
      <Step n={3} className="left-[848px] top-[170px]" />
    </div>
  );
}
